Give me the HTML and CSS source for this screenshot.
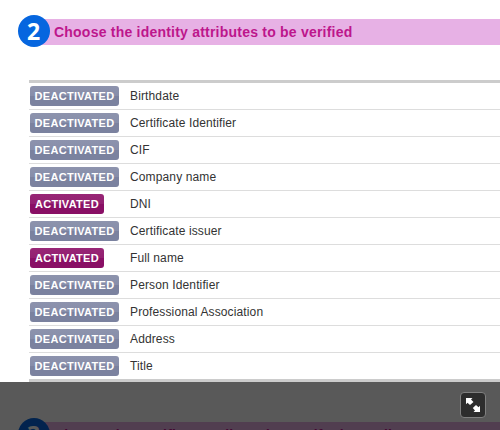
FILE: index.html
```html
<!DOCTYPE html>
<html lang="en">
<head>
<meta charset="utf-8">
<title>Identity attributes</title>
<link rel="stylesheet" href="styles.css">
</head>
<body>
<main class="page">
  <header class="step">
    <span class="step-number">2</span>
    <h2 class="step-title">Choose the identity attributes to be verified</h2>
  </header>
  <ul class="attributes">
    <li class="attribute"><span class="state-cell"><span class="state">DEACTIVATED</span></span><span class="name">Birthdate</span></li>
    <li class="attribute"><span class="state-cell"><span class="state">DEACTIVATED</span></span><span class="name">Certificate Identifier</span></li>
    <li class="attribute"><span class="state-cell"><span class="state">DEACTIVATED</span></span><span class="name">CIF</span></li>
    <li class="attribute"><span class="state-cell"><span class="state">DEACTIVATED</span></span><span class="name">Company name</span></li>
    <li class="attribute"><span class="state-cell"><span class="state active">ACTIVATED</span></span><span class="name">DNI</span></li>
    <li class="attribute"><span class="state-cell"><span class="state">DEACTIVATED</span></span><span class="name">Certificate issuer</span></li>
    <li class="attribute"><span class="state-cell"><span class="state active">ACTIVATED</span></span><span class="name">Full name</span></li>
    <li class="attribute"><span class="state-cell"><span class="state">DEACTIVATED</span></span><span class="name">Person Identifier</span></li>
    <li class="attribute"><span class="state-cell"><span class="state">DEACTIVATED</span></span><span class="name">Professional Association</span></li>
    <li class="attribute"><span class="state-cell"><span class="state">DEACTIVATED</span></span><span class="name">Address</span></li>
    <li class="attribute"><span class="state-cell"><span class="state">DEACTIVATED</span></span><span class="name">Title</span></li>
  </ul>
  <header class="step">
    <span class="step-number">3</span>
    <h2 class="step-title">Choose the certificates allowed to verify the attributes</h2>
  </header>
  <div class="overlay">
    <button class="expand" aria-label="Expand">
      <svg width="14" height="14" viewBox="0 0 14 14"><path fill="#fff" d="M0 0H6.500L5 1.500L7.500 4L4 7L1.500 4.800L0 6.300ZM14 14H7.500L9 12.500L6.800 10L10 7L12.500 9.200L14 7.700Z"/></svg>
    </button>
  </div>
</main>
</body>
</html>
```
FILE: styles.css
```css
* { box-sizing: border-box; }
body { margin: 0; background: #fff; font-family: "Liberation Sans", Arial, sans-serif; color: #333; }
.page { position: relative; height: 430px; overflow: hidden; padding: 15px 0 0 18px; }
.step { display: flex; align-items: flex-start; height: 33px; background: linear-gradient(#e7b1e5, #e7b1e5) 16px 4px / 100% 26px no-repeat; }
.step-number { width: 32px; height: 32px; flex: none; border-radius: 50%; background: #0666df; color: #fff; font: bold 23px/32px "Open Sans", sans-serif; text-align: center; padding-right: 1px; }
.step-title { margin: 7px 0 0 4px; font-size: 14px; line-height: 20px; letter-spacing: .22px; color: #bd168c; white-space: nowrap; }
.attributes { list-style: none; margin: 32px 0 36px 11px; padding: 0; border: solid #ccc; border-width: 3px 0; }
.attribute { display: flex; height: 27px; padding: 3px 0 3px 1px; border-bottom: 1px solid #ddd; }
.attribute:last-child { height: 26px; border-bottom: 0; }
.state-cell { width: 100px; flex: none; display: flex; }
.state { width: 89px; height: 20px; border-radius: 3px; background: linear-gradient(#8d93ad 0, #878eaa 50%, #7b829f 50%, #7b829f 100%); color: #fff; font: bold 11px/21px "Liberation Sans", Arial, sans-serif; letter-spacing: .3px; text-align: center; }
.state.active { width: 74px; background: linear-gradient(#982676 0, #932071 50%, #890f65 50%, #890f65 100%); }
.name { font-size: 12px; line-height: 20px; letter-spacing: .13px; white-space: nowrap; }
.overlay { position: absolute; left: 0; right: 0; top: 382px; height: 48px; padding: 10px 14px; display: flex; justify-content: flex-end; background: rgba(0, 0, 0, .65); }
.expand { width: 26px; height: 26px; padding: 0; display: flex; align-items: center; justify-content: center; border: 1px solid #808080; border-radius: 4px; background: #2d2d2d; }
```
